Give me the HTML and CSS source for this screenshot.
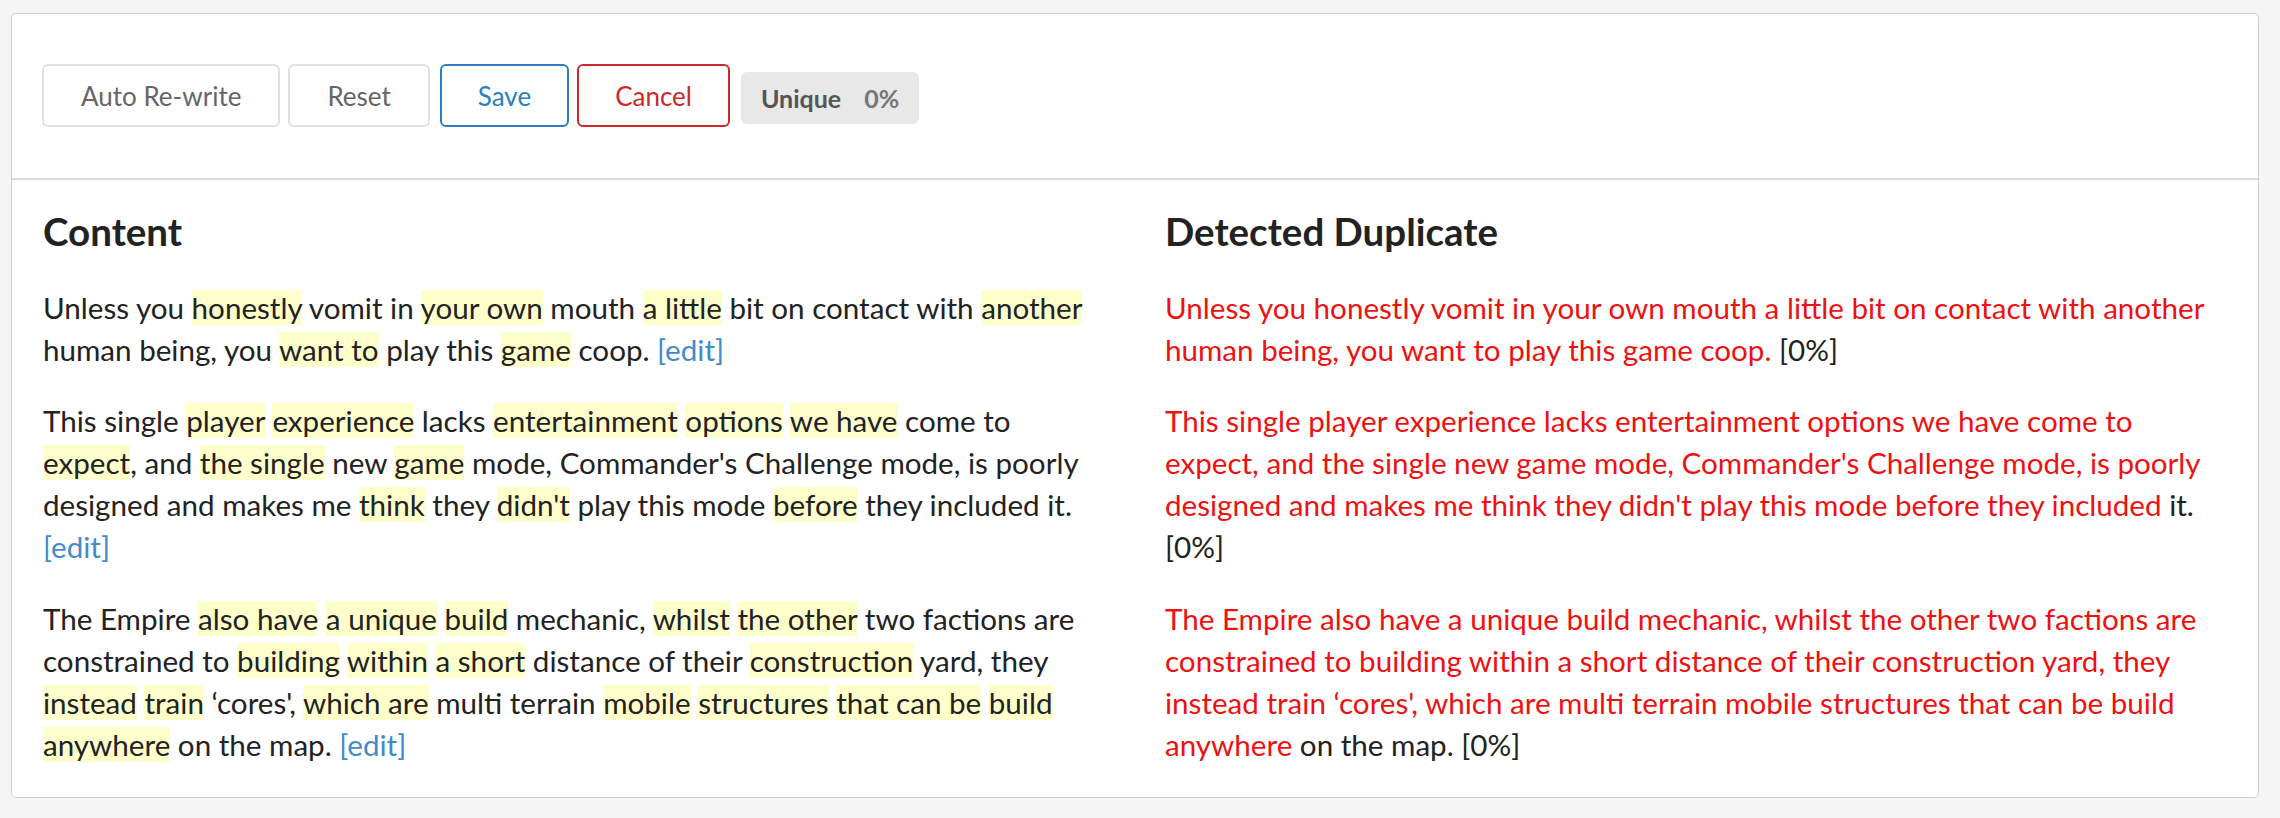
FILE: index.html
```html
<!DOCTYPE html>
<html lang="en">

<head>
    <meta charset="UTF-8">
    <meta name="viewport" content="width=device-width, initial-scale=1.0">
    <title>Duplicate check</title>
    <link rel="stylesheet" href="styles.css">
</head>

<body>
    <div class="panel">
        <div class="toolbar">
            <button class="btn">Auto Re-write</button>
            <button class="btn">Reset</button>
            <button class="btn save">Save</button>
            <button class="btn cancel">Cancel</button>
            <div class="unique">
                <span class="unique-label">Unique</span>
                <span class="unique-value">0%</span>
            </div>
        </div>
        <div class="compare">
            <div class="column">
                <h3>Content</h3>
                <p>Unless you <span class="hl">honestly</span> vomit in <span class="hl">your own</span> mouth <span class="hl">a little</span> bit on contact with <span class="hl">another</span> human being, you <span class="hl">want to</span> play this <span class="hl">game</span> coop. <a href="#">[edit]</a></p>
                <p>This single <span class="hl">player</span> <span class="hl">experience</span> lacks <span class="hl">entertainment</span> <span class="hl">options</span> <span class="hl">we have</span> come to <span class="hl">expect</span>, and <span class="hl">the single</span> new <span class="hl">game</span> mode, Commander's Challenge mode, is poorly designed and makes me <span class="hl">think</span> they <span class="hl">didn't</span> play this mode <span class="hl">before</span> they included it. <a href="#">[edit]</a></p>
                <p>The Empire <span class="hl">also have</span> <span class="hl">a unique</span> <span class="hl">build</span> mechanic, <span class="hl">whilst</span> <span class="hl">the other</span> two factions are constrained to <span class="hl">building</span> <span class="hl">within</span> <span class="hl">a short</span> distance of their <span class="hl">construction</span> yard, they <span class="hl">instead</span> <span class="hl">train</span> ‘cores', <span class="hl">which are</span> multi terrain <span class="hl">mobile</span> <span class="hl">structures</span> <span class="hl">that can be</span> <span class="hl">build</span> <span class="hl">anywhere</span> on the map. <a href="#">[edit]</a></p>
            </div>
            <div class="column">
                <h3>Detected Duplicate</h3>
                <p><span class="dup">Unless you honestly vomit in your own mouth a little bit on contact with another human being, you want to play this game coop.</span> [0%]</p>
                <p><span class="dup">This single player experience lacks entertainment options we have come to expect, and the single new game mode, Commander's Challenge mode, is poorly designed and makes me think they didn't play this mode before they included</span> it. [0%]</p>
                <p><span class="dup">The Empire also have a unique build mechanic, whilst the other two factions are constrained to building within a short distance of their construction yard, they instead train ‘cores', which are multi terrain mobile structures that can be build anywhere</span> on the map. [0%]</p>
            </div>
        </div>
    </div>
</body>

</html>
```

FILE: styles.css
```css
body {
    margin: 0;
    padding: 13px 21px 0 11px;
    font-family: Lato, "Open Sans", Arial, sans-serif;
    background-color: #f5f5f5;
    color: #222;
}

.panel {
    background-color: white;
    border: 1px solid #cfcfcf;
    border-radius: 5px;
}

.toolbar {
    display: flex;
    align-items: center;
    gap: 8px;
    padding: 50px 30px 51px;
    border-bottom: 2px solid #d9d9d9;
}

.btn {
    height: 63px;
    padding: 0 37px;
    font-family: inherit;
    font-size: 26px;
    color: #666;
    background-color: white;
    border: 2px solid #e0e0e0;
    border-radius: 6px;
    cursor: pointer;
}

.btn.save {
    color: #2a7fc1;
    border-color: #2a7fc1;
    margin-left: 2px;
    padding: 0 36px;
}

.btn.cancel {
    color: #cc2a2a;
    border-color: #cc2a2a;
    padding: 0 36px;
}

.unique {
    display: flex;
    align-items: center;
    gap: 23px;
    height: 52px;
    margin: 5px 0 0 3px;
    padding: 0 20px;
    background-color: #e8e8e8;
    border-radius: 6px;
    font-size: 25px;
    font-weight: 700;
}

.unique-label {
    color: #555;
}

.unique-value {
    color: #777;
}

.compare {
    display: grid;
    grid-template-columns: 1fr 1fr;
    column-gap: 70px;
    padding: 30px 41px 2px 31px;
}

.column h3 {
    margin: 0 0 34.5px;
    font-size: 38.5px;
    line-height: 42px;
    font-weight: 700;
    color: #222;
}

.column p {
    margin: 0 0 29.5px;
    font-size: 29.6px;
    line-height: 42px;
}

.hl {
    background-color: #ffffcc;
}

.column a {
    color: #428bca;
    text-decoration: none;
}

.dup {
    color: #ee1111;
}
```
